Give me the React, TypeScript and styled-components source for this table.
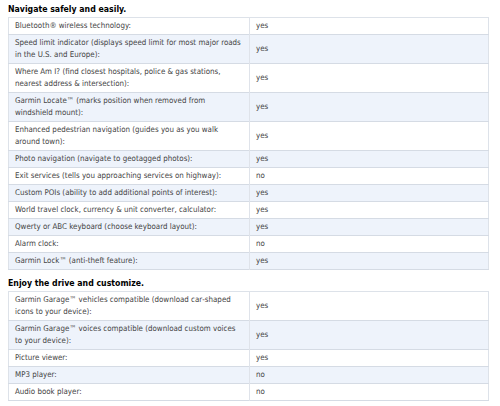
import React from "react";
import styled, { createGlobalStyle } from "styled-components";

const Global = createGlobalStyle`
  html, body { margin: 0; padding: 0; background: #ffffff; }
  body { font-family: "DejaVu Sans Condensed", "DejaVu Sans", Verdana, sans-serif; }
`;

const Page = styled.div`
  width: 500px;
  padding: 3px 11px 0 8px;
  box-sizing: border-box;
  display: flex;
  flex-direction: column;
  gap: 7px;
`;

const Section = styled.section`
  display: flex;
  flex-direction: column;
`;

const Heading = styled.h3`
  margin: 0;
  height: 14px;
  line-height: 12px;
  font-size: 8.7px;
  font-weight: bold;
  color: #000000;
  font-family: "DejaVu Sans Condensed", "DejaVu Sans", Verdana, sans-serif;
`;

const Table = styled.table`
  width: 481px;
  border-collapse: collapse;
  table-layout: fixed;
  border: 1px solid #dde2e9;
`;

const Row = styled.tr<{ $alt: boolean }>`
  background: ${(p) => (p.$alt ? "#eef3fb" : "#ffffff")};
  border-bottom: 1px solid #d5dbe4;
`;

const Label = styled.td`
  width: 241px;
  box-sizing: border-box;
  padding: 2px 6px;
  font-size: 7.9px;
  line-height: 12px;
  color: #444444;
  vertical-align: middle;
`;

const Value = styled.td`
  padding: 2px 6px;
  font-size: 7.9px;
  line-height: 12px;
  color: #444444;
  border-left: 1px solid #dfe3ea;
  vertical-align: middle;
`;

type Item = [string, string];

const navigate: Item[] = [
  ["Bluetooth® wireless technology:", "yes"],
  ["Speed limit indicator (displays speed limit for most major roads in the U.S. and Europe):", "yes"],
  ["Where Am I? (find closest hospitals, police & gas stations, nearest address & intersection):", "yes"],
  ["Garmin Locate™ (marks position when removed from windshield mount):", "yes"],
  ["Enhanced pedestrian navigation (guides you as you walk around town):", "yes"],
  ["Photo navigation (navigate to geotagged photos):", "yes"],
  ["Exit services (tells you approaching services on highway):", "no"],
  ["Custom POIs (ability to add additional points of interest):", "yes"],
  ["World travel clock, currency & unit converter, calculator:", "yes"],
  ["Qwerty or ABC keyboard (choose keyboard layout):", "yes"],
  ["Alarm clock:", "no"],
  ["Garmin Lock™ (anti-theft feature):", "yes"],
];

const enjoy: Item[] = [
  ["Garmin Garage™ vehicles compatible (download car\u2011shaped icons to your device):", "yes"],
  ["Garmin Garage™ voices compatible (download custom voices to your device):", "yes"],
  ["Picture viewer:", "yes"],
  ["MP3 player:", "no"],
  ["Audio book player:", "no"],
];

const SpecTable = ({ title, items }: { title: string; items: Item[] }) => (
  <Section>
    <Heading>{title}</Heading>
    <Table>
      <tbody>
        {items.map(([l, v], i) => (
          <Row key={l} $alt={i % 2 === 1}>
            <Label>{l}</Label>
            <Value>{v}</Value>
          </Row>
        ))}
      </tbody>
    </Table>
  </Section>
);

export default function App() {
  return (
    <>
      <Global />
      <Page>
        <SpecTable title="Navigate safely and easily." items={navigate} />
        <SpecTable title="Enjoy the drive and customize." items={enjoy} />
      </Page>
    </>
  );
}
